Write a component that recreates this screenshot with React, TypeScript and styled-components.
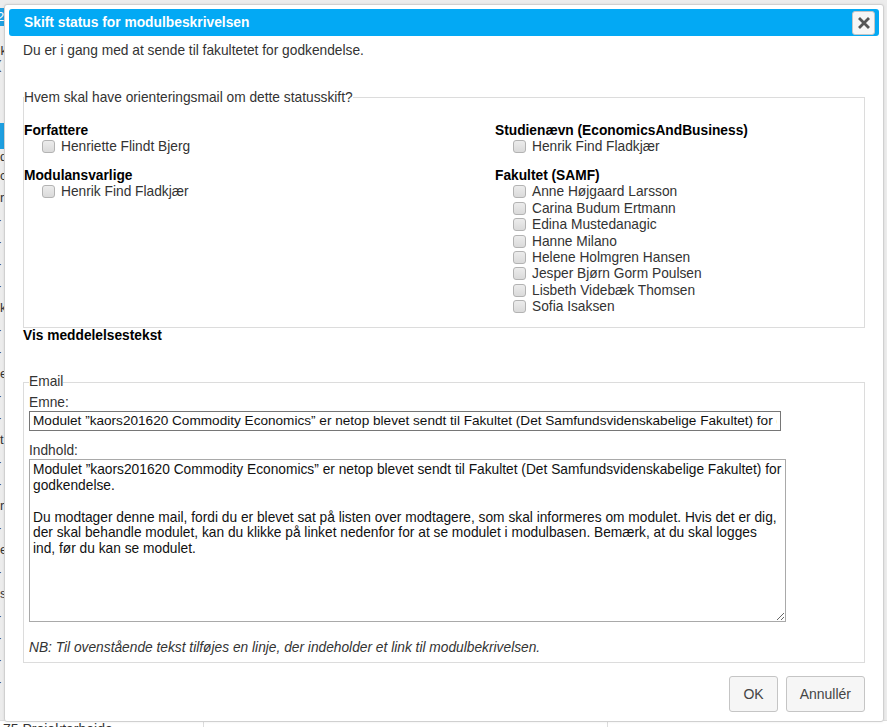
import React from "react";
import styled, { createGlobalStyle } from "styled-components";

const GlobalStyle = createGlobalStyle`
  html, body { margin: 0; padding: 0; }
  body {
    background: #ececec;
    font-family: "Liberation Sans", Arial, sans-serif;
    font-size: 13.75px;
    color: #333;
  }
`;

const Page = styled.div`
  position: relative;
  width: 887px;
  height: 727px;
  overflow: hidden;
`;

const BgColumn = styled.div`
  display: flex;
  flex-direction: column;
  margin-left: -5px;
  padding-top: 8px;
  width: 300px;
`;

const BgItem = styled.div<{ $h: number; $blue?: boolean }>`
  height: ${(p) => p.$h}px;
  line-height: ${(p) => p.$h}px;
  font-size: 13px;
  color: ${(p) => (p.$blue ? "#fff" : "#333")};
  background: ${(p) => (p.$blue ? "#1e9fe0" : "transparent")};
  padding-left: 2px;
  white-space: nowrap;
`;

const BgFooter = styled.div`
  position: absolute;
  left: 0;
  top: 720px;
  width: 887px;
  height: 10px;
  background: #fff;
  border-top: 1px solid #ddd;
  display: flex;
`;

const BgFooterCell = styled.div<{ $w: number }>`
  width: ${(p) => p.$w}px;
  border-right: 1px solid #ddd;
  font-size: 14px;
  line-height: 16px;
  padding-left: 3px;
  color: #333;
`;

const Dialog = styled.div`
  position: absolute;
  left: 4px;
  top: 4px;
  width: 880px;
  height: 718px;
  box-sizing: border-box;
  background: #fff;
  border: 1px solid #d0d0d0;
  border-radius: 3px;
  padding: 4px;
  display: flex;
  flex-direction: column;
  box-shadow: 0 0 3px rgba(0, 0, 0, 0.08);
`;

const TitleBar = styled.div`
  height: 27px;
  background: #03a9f4;
  border-radius: 3px;
  display: flex;
  align-items: center;
  justify-content: space-between;
  padding: 0 4px 0 15px;
  color: #fff;
  font-weight: bold;
  font-size: 13.8px;
`;

const CloseButton = styled.button`
  width: 23px;
  height: 24px;
  box-sizing: border-box;
  border: 1px solid #c5c5c5;
  border-radius: 3px;
  background: #f6f6f6;
  padding: 0;
  display: flex;
  align-items: center;
  justify-content: center;
  margin-top: 1px;
`;

const Content = styled.div`
  flex: 1;
  padding: 7px 14px 0 14px;
  display: flex;
  flex-direction: column;
`;

const Intro = styled.p`
  margin: 0 0 31px 0;
  line-height: 15.6px;
  color: #333;
`;

const Fieldset = styled.fieldset<{ $pad: string }>`
  margin: 0;
  border: 1px solid #dcdcdc;
  padding: ${(p) => p.$pad};
  min-width: 0;
`;

const Legend = styled.legend`
  padding: 0;
  margin-left: 0;
  line-height: 15.6px;
  color: #333;
`;

const Columns = styled.div`
  display: grid;
  grid-template-columns: 471px 1fr;
`;

const Column = styled.div`
  display: flex;
  flex-direction: column;
  gap: 13px;
`;

const Group = styled.div`
  display: flex;
  flex-direction: column;
`;

const GroupTitle = styled.div`
  font-weight: bold;
  color: #000;
  line-height: 15.6px;
`;

const Item = styled.label`
  display: flex;
  align-items: center;
  height: 16.4px;
  padding-left: 18px;
  color: #333;
  white-space: nowrap;
`;

const Check = styled.input.attrs({ type: "checkbox" })`
  appearance: none;
  -webkit-appearance: none;
  width: 13px;
  height: 13px;
  margin: 0 6px 0 0;
  box-sizing: border-box;
  border: 1px solid #b3b3b3;
  border-radius: 3px;
  background: linear-gradient(#ececec, #dadada);
`;

const ShowText = styled.div`
  font-weight: bold;
  color: #000;
  line-height: 15.6px;
  margin-bottom: 31px;
`;

const FieldLabel = styled.div`
  line-height: 15.6px;
  color: #333;
`;

const SubjectInput = styled.input`
  display: block;
  width: 752px;
  height: 20px;
  box-sizing: border-box;
  border: 1px solid #767676;
  padding: 0 3px;
  font-family: "Liberation Sans", Arial, sans-serif;
  font-size: 13.6px;
  color: #111;
  margin: 0 0 12px 0;
`;

const BodyArea = styled.textarea`
  width: 757px;
  height: 163px;
  box-sizing: border-box;
  border: 1px solid #a9a9a9;
  padding: 2px 3px;
  font-family: "Liberation Sans", Arial, sans-serif;
  font-size: 13.75px;
  line-height: 15.8px;
  color: #111;
  margin: 1px 0 18px 0;
  resize: both;
  display: block;
`;

const Note = styled.div`
  font-style: italic;
  line-height: 15.6px;
  color: #333;
`;

const Footer = styled.div`
  display: flex;
  justify-content: flex-end;
  gap: 8px;
  padding: 13px 0 0 0;
`;

const Button = styled.button`
  height: 36px;
  margin: 0;
  padding: 0 13px;
  border: 1px solid #c5c5c5;
  border-radius: 3px;
  background: #f6f6f6;
  font-family: "Liberation Sans", Arial, sans-serif;
  font-size: 14px;
  color: #454545;
`;

const authors = ["Henriette Flindt Bjerg"];
const responsible = ["Henrik Find Fladkjær"];
const board = ["Henrik Find Fladkjær"];
const faculty = [
  "Anne Højgaard Larsson",
  "Carina Budum Ertmann",
  "Edina Mustedanagic",
  "Hanne Milano",
  "Helene Holmgren Hansen",
  "Jesper Bjørn Gorm Poulsen",
  "Lisbeth Videbæk Thomsen",
  "Sofia Isaksen",
];

const bgLines: { t: string; h: number; blue?: boolean }[] = [
  { t: "2", h: 18, blue: true },
  { t: "", h: 18 },
  { t: "Ik", h: 14 },
  { t: "(", h: 14 },
  { t: "", h: 51 },
  { t: "", h: 26, blue: true },
  { t: "ld", h: 16 },
  { t: "lc", h: 22 },
  { t: "lr", h: 22 },
  { t: "-", h: 22 },
  { t: "-", h: 22 },
  { t: "-", h: 22 },
  { t: "-", h: 22 },
  { t: "lk", h: 22 },
  { t: "-", h: 22 },
  { t: "-", h: 22 },
  { t: "le", h: 22 },
  { t: "-", h: 22 },
  { t: "-", h: 22 },
  { t: "lt", h: 22 },
  { t: "-", h: 22 },
  { t: "-", h: 22 },
  { t: "lre", h: 22 },
  { t: "-", h: 22 },
  { t: "le", h: 22 },
  { t: "-", h: 22 },
  { t: "ls", h: 22 },
  { t: "-", h: 22 },
  { t: "-", h: 22 },
  { t: "-", h: 22 },
  { t: "-", h: 22 },
];

const subject =
  "Modulet \u201dkaors201620 Commodity Economics\u201d er netop blevet sendt til Fakultet (Det Samfundsvidenskabelige Fakultet) for godkendelse.";

const bodyText =
  "Modulet \u201dkaors201620 Commodity Economics\u201d er netop blevet sendt til Fakultet (Det Samfundsvidenskabelige Fakultet) for godkendelse.\n\nDu modtager denne mail, fordi du er blevet sat på listen over modtagere, som skal informeres om modulet. Hvis det er dig, der skal behandle modulet, kan du klikke på linket nedenfor for at se modulet i modulbasen. Bemærk, at du skal logges ind, før du kan se modulet.";

const CheckList = ({ names }: { names: string[] }) => (
  <>
    {names.map((n) => (
      <Item key={n}>
        <Check />
        {n}
      </Item>
    ))}
  </>
);

export default function App() {
  return (
    <Page>
      <GlobalStyle />
      <BgColumn>
        {bgLines.map((l, i) => (
          <BgItem key={i} $h={l.h} $blue={l.blue}>
            {l.t}
          </BgItem>
        ))}
      </BgColumn>
      <BgFooter>
        <BgFooterCell $w={200}>75 Projektarbejde</BgFooterCell>
        <BgFooterCell $w={400}></BgFooterCell>
      </BgFooter>
      <Dialog>
        <TitleBar>
          <span>Skift status for modulbeskrivelsen</span>
          <CloseButton aria-label="Luk">
            <svg width="12" height="12" viewBox="0 0 12 12">
              <path d="M2 2 L10 10 M10 2 L2 10" stroke="#555" strokeWidth="2.8" strokeLinecap="square" />
            </svg>
          </CloseButton>
        </TitleBar>
        <Content>
          <Intro>Du er i gang med at sende til fakultetet for godkendelse.</Intro>
          <Fieldset $pad="18px 0 12px 0">
            <Legend>Hvem skal have orienteringsmail om dette statusskift?</Legend>
            <Columns>
              <Column>
                <Group>
                  <GroupTitle>Forfattere</GroupTitle>
                  <CheckList names={authors} />
                </Group>
                <Group>
                  <GroupTitle>Modulansvarlige</GroupTitle>
                  <CheckList names={responsible} />
                </Group>
              </Column>
              <Column>
                <Group>
                  <GroupTitle>Studienævn (EconomicsAndBusiness)</GroupTitle>
                  <CheckList names={board} />
                </Group>
                <Group>
                  <GroupTitle>Fakultet (SAMF)</GroupTitle>
                  <CheckList names={faculty} />
                </Group>
              </Column>
            </Columns>
          </Fieldset>
          <ShowText>Vis meddelelsestekst</ShowText>
          <Fieldset $pad="5px 6px 6px 5px">
            <Legend>Email</Legend>
            <FieldLabel>Emne:</FieldLabel>
            <SubjectInput defaultValue={subject} />
            <FieldLabel>Indhold:</FieldLabel>
            <BodyArea defaultValue={bodyText} />
            <Note>
              NB: Til ovenstående tekst tilføjes en linje, der indeholder et link til modulbekrivelsen.
            </Note>
          </Fieldset>
          <Footer>
            <Button>OK</Button>
            <Button>Annullér</Button>
          </Footer>
        </Content>
      </Dialog>
    </Page>
  );
}
